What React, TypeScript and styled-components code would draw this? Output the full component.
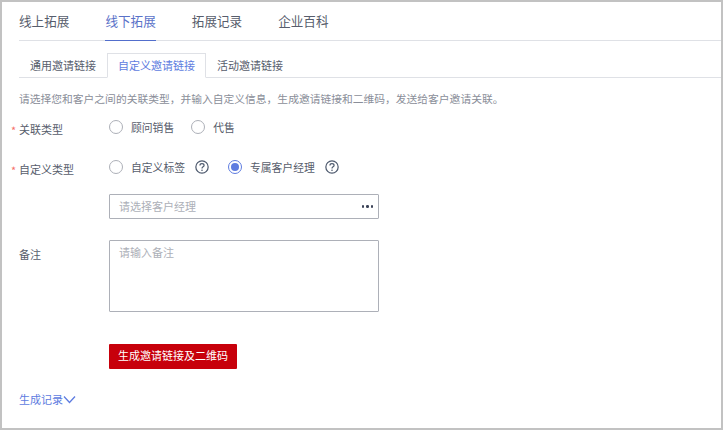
import React from "react";
import styled, { createGlobalStyle } from "styled-components";

const Global = createGlobalStyle`
  html, body { margin: 0; padding: 0; background: #fff; }
  * { box-sizing: border-box; }
  body { font-family: "Noto Sans CJK SC", "Liberation Sans", sans-serif; }
`;
const Frame = styled.div`
  width: 723px; height: 430px; border: 2px solid #c2c2c2; background: #fff;
  padding: 0 0 0 17px; overflow: hidden; display: flex; flex-direction: column;
`;
const MainTabs = styled.div`
  display: flex; gap: 36px; height: 39px; border-bottom: 1px solid #dfe1e6; flex: none;
`;
const MainTab = styled.div<{ $active?: boolean }>`
  width: 50.4px; height: 39px; line-height: 38px; font-size: 12.6px; white-space: nowrap;
  color: ${p => (p.$active ? "#5a72c8" : "#575d6c")};
  border-bottom: ${p => (p.$active ? "1px solid #526ecc" : "none")};
`;
const SubTabs = styled.div`
  display: flex; height: 25px; margin-top: 12px; border-bottom: 1px solid #dfe1e6; flex: none;
`;
const SubTab = styled.div<{ $active?: boolean }>`
  height: 25px; padding: 0 10px; font-size: 11px; line-height: 22px; white-space: nowrap;
  color: ${p => (p.$active ? "#5e7ce0" : "#575d6c")};
  border: 1px solid ${p => (p.$active ? "#dfe1e6" : "transparent")};
  border-bottom: ${p => (p.$active ? "1px solid #fff" : "none")};
`;
const Hint = styled.div`
  margin-top: 12px; height: 16px; font-size: 10.78px; line-height: 16px; color: #8a8e99; white-space: nowrap;
`;
const Row = styled.div<{ $top: number }>`
  display: flex; margin-top: ${p => p.$top}px;
`;
const Label = styled.div<{ $pad?: number }>`
  width: 90px; flex: none; font-size: 11px; line-height: 16px; color: #575d6c; position: relative;
  padding-top: ${p => p.$pad ?? 3}px;
`;
const Star = styled.span`
  position: absolute; left: -8px; top: 4px; color: #f66f6a; font-size: 11px; line-height: 16px;
`;
const Radios = styled.div`
  display: flex; align-items: center; height: 16px; margin-top: 1px;
`;
const Radio = styled.span<{ $on?: boolean }>`
  width: 14px; height: 14px; border-radius: 50%; flex: none; margin-right: 8px;
  border: 1px solid ${p => (p.$on ? "#5e7ce0" : "#adb0b8")}; display: flex; align-items: center; justify-content: center;
  &::after { content: ""; display: ${p => (p.$on ? "block" : "none")}; width: 8px; height: 8px; border-radius: 50%; background: #5e7ce0; }
`;
const RadioText = styled.span<{ $gap: number }>`
  font-size: 10.8px; line-height: 16px; color: #575d6c; white-space: nowrap; margin-right: ${p => p.$gap}px;
`;
const Help = styled.svg`
  width: 14px; height: 14px; flex: none; margin-right: 18.5px;
`;
const SelectBox = styled.div`
  margin-left: 90px; margin-top: 17px; width: 270px; height: 25px; border: 1px solid #adb0b8; border-radius: 1px;
  display: flex; align-items: center; justify-content: space-between; padding: 0 5px 2px 9px;
  font-size: 11px; color: #adb0b8; flex: none;
`;
const Dots = styled.span`
  display: flex; gap: 2px; margin-top: 2px;
  i { width: 2.5px; height: 2.5px; border-radius: 50%; background: #3b4257; display: block; }
`;
const Area = styled.div`
  width: 270px; height: 72px; border: 1px solid #adb0b8; border-radius: 1px; padding: 3px 9px;
  font-size: 11px; line-height: 16px; color: #adb0b8;
`;
const Submit = styled.div`
  margin-left: 90px; margin-top: 32px; width: 128px; height: 25px; border-radius: 1px; background: #c7000b; color: #fff;
  font-size: 11px; line-height: 23px; text-align: center; white-space: nowrap; flex: none;
`;
const Record = styled.div`
  margin-top: 22px; display: flex; align-items: center; font-size: 11px; line-height: 16px; color: #5e7ce0;
`;

const HelpIcon = () => (
  <Help viewBox="0 0 15 15" fill="none">
    <circle cx="7.5" cy="7.5" r="6.6" stroke="#4e5a6e" strokeWidth="1.3" />
    <path d="M5.3 5.9c0-1.3 1-2 2.2-2s2.2.8 2.2 1.9c0 1.5-2.2 1.5-2.2 3.2" stroke="#4e5a6e" strokeWidth="1.3" />
    <circle cx="7.5" cy="11" r=".85" fill="#4e5a6e" />
  </Help>
);

export default function App() {
  return (
    <>
      <Global />
      <Frame>
        <MainTabs>
          <MainTab>线上拓展</MainTab>
          <MainTab $active>线下拓展</MainTab>
          <MainTab>拓展记录</MainTab>
          <MainTab>企业百科</MainTab>
        </MainTabs>
        <SubTabs>
          <SubTab>通用邀请链接</SubTab>
          <SubTab $active>自定义邀请链接</SubTab>
          <SubTab>活动邀请链接</SubTab>
        </SubTabs>
        <Hint>请选择您和客户之间的关联类型，并输入自定义信息，生成邀请链接和二维码，发送给客户邀请关联。</Hint>
        <Row $top={12}>
          <Label><Star>*</Star>关联类型</Label>
          <Radios>
            <Radio /><RadioText $gap={17}>顾问销售</RadioText>
            <Radio /><RadioText $gap={0}>代售</RadioText>
          </Radios>
        </Row>
        <Row $top={21}>
          <Label><Star>*</Star>自定义类型</Label>
          <Radios>
            <Radio /><RadioText $gap={10.5}>自定义标签</RadioText>
            <HelpIcon />
            <Radio $on /><RadioText $gap={10.5}>专属客户经理</RadioText>
            <HelpIcon />
          </Radios>
        </Row>
        <SelectBox>请选择客户经理<Dots><i /><i /><i /></Dots></SelectBox>
        <Row $top={21}>
          <Label $pad={6}>备注</Label>
          <Area>请输入备注</Area>
        </Row>
        <Submit>生成邀请链接及二维码</Submit>
        <Record>
          生成记录
          <svg width="13" height="9" viewBox="0 0 13 9" fill="none">
            <path d="M1 1.5 6.5 7.5l5.5-6" stroke="#5e7ce0" strokeWidth="1.3" />
          </svg>
        </Record>
      </Frame>
    </>
  );
}
